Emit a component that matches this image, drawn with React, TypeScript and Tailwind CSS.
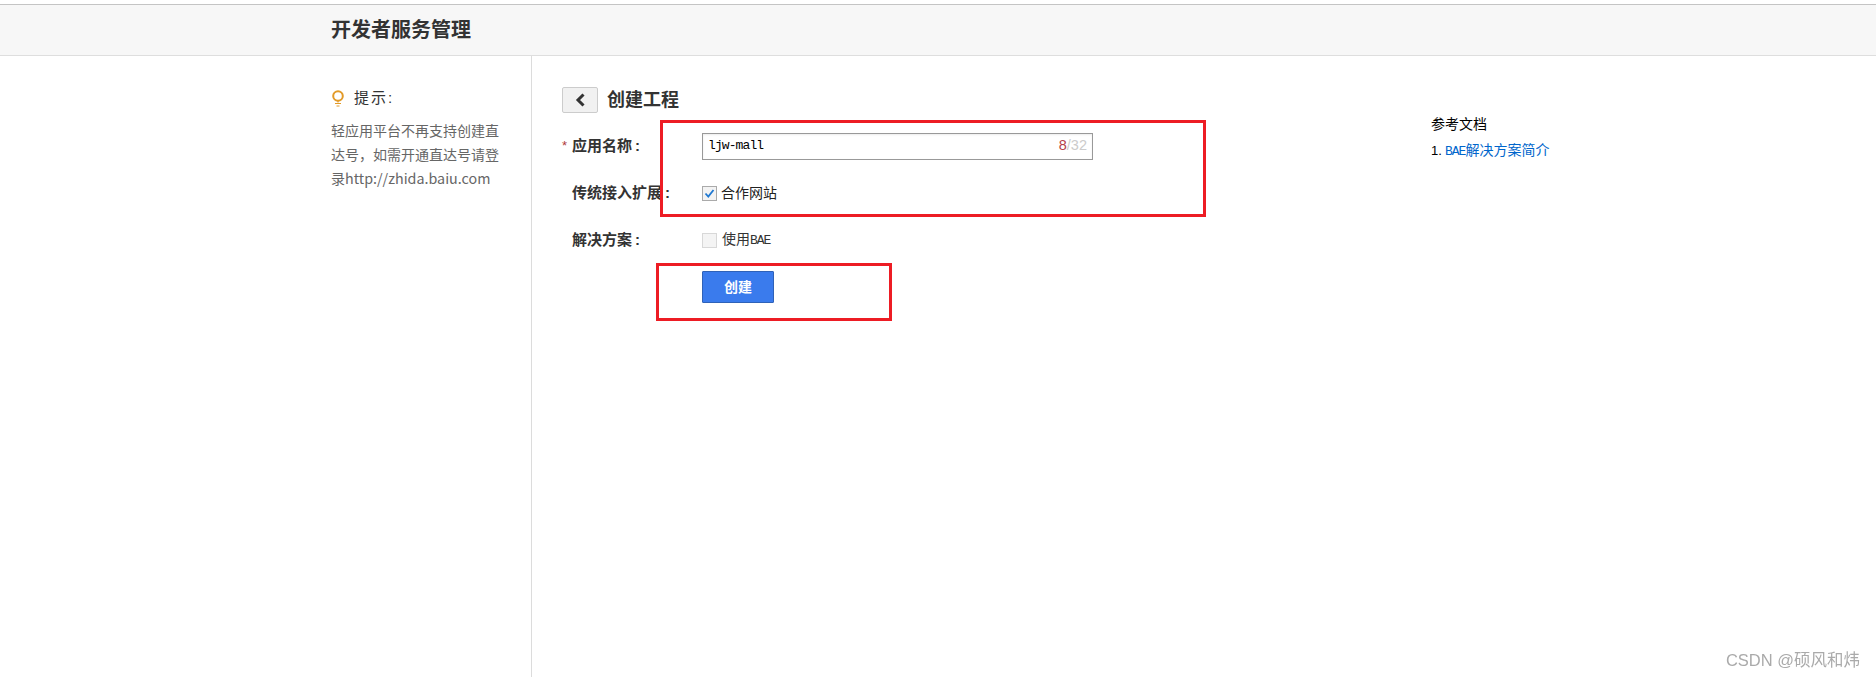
import React from "react";

const sans = "font-['Liberation_Sans','Noto_Sans_CJK_SC',sans-serif]";
const mono = "font-['Liberation_Mono',monospace]";

function FormRow({ label, required, children }: { label?: string; required?: boolean; children: React.ReactNode }) {
  return (
    <div className="flex h-[30px] items-center">
      <div className="flex w-[140px] shrink-0 items-center text-[15px] font-bold text-[#333]">
        <span className="w-[10px] shrink-0 text-[13px] font-normal text-[#b03a3a]">{required ? "*" : ""}</span>
        <span>{label}</span>
        <span className="ml-[3px]">:</span>
      </div>
      {children}
    </div>
  );
}

export default function App() {
  return (
    <div className={`relative flex h-[677px] w-[1876px] flex-col overflow-hidden bg-white ${sans}`}>
      <div className="h-[4px] shrink-0 bg-white" />
      <header className="flex h-[52px] shrink-0 items-center border-y border-t-[#c4c4c4] border-b-[#dedede] bg-[#f7f7f7] pl-[331px]">
        <h1 className="text-[20px] font-bold text-[#333]">开发者服务管理</h1>
      </header>

      <div className="flex flex-1">
        <aside className="w-[532px] shrink-0 border-r border-[#dcdcdc] pl-[331px] pr-[30px] pt-[30px]">
          <div className="flex h-[24px] items-center gap-[10px] pl-[1px] text-[15px] tracking-[2px] text-[#333]">
            <svg width="12" height="17" viewBox="0 0 12 17" fill="none" stroke="#e29a28" strokeWidth="2">
              <circle cx="6" cy="6" r="4.8" />
              <path d="M6 11v1.5M3 13.5h6M4.5 16h3" strokeWidth="1.2" />
            </svg>
            <span>提示:</span>
          </div>
          <p className="mt-[8px] w-[172px] font-['Noto_Sans_CJK_SC',sans-serif] text-[14px] leading-[24px] text-[#666]">
            {"轻应用平台不再支持创建直达号\uFF0C如需开通直达号请登录"}<span className="text-[14.3px]">http://zhida.baiu.com</span>
          </p>
        </aside>

        <main className="flex flex-1 pl-[30px]">
          <div className="w-[869px] shrink-0 pt-[31px]">
            <div className="flex h-[26px] items-center gap-[9px]">
              <button className="flex h-[26px] w-[36px] items-center justify-center rounded-[2px] border border-[#ccc] bg-[#f1f1f1]">
                <svg width="12" height="14" viewBox="0 0 12 14" fill="none" stroke="#333" strokeWidth="3">
                  <path d="M9.5 1.5 4 7l5.5 5.5" />
                </svg>
              </button>
              <h2 className="text-[18px] font-bold text-[#333]">创建工程</h2>
            </div>

            <div className="mt-[18px]">
              <FormRow label="应用名称" required>
                <div className="flex h-[27px] w-[391px] items-center justify-between border-[1.5px] border-[#999] pl-[5px] pr-[5px] shadow-[inset_0_1px_2px_rgba(0,0,0,0.08)]">
                  <span className={`${mono} text-[13px] tracking-[-0.9px] text-black`}>ljw-mall</span>
                  <span className="text-[14.5px] font-light text-[#ccc]">
                    <span className="text-[#b5414a]">8</span>/32
                  </span>
                </div>
              </FormRow>

              <div className="mt-[17px]">
                <FormRow label="传统接入扩展">
                  <div className="flex items-center gap-[4px] text-[14px] text-[#222]">
                    <span className="flex h-[15px] w-[15px] items-center justify-center border border-[#aaa] bg-[#f3f3f3]">
                      <svg width="11" height="11" viewBox="0 0 11 11" fill="none" stroke="#1f78d1" strokeWidth="1.8">
                        <path d="M1.5 5.5 4.3 8.5 9.5 2" />
                      </svg>
                    </span>
                    <span>合作网站</span>
                  </div>
                </FormRow>
              </div>

              <div className="mt-[17px]">
                <FormRow label="解决方案">
                  <div className="flex items-center gap-[5px] text-[14px] text-[#333]">
                    <span className="h-[15px] w-[15px] border border-[#d8d8d8] bg-[#f4f4f4]" />
                    <span>
                      使用<span className={`${mono} text-[13px] tracking-[-1px]`}>BAE</span>
                    </span>
                  </div>
                </FormRow>
              </div>

              <div className="mt-[16px] pl-[140px]">
                <button className="h-[32px] w-[72px] rounded-[1px] border border-[#2f62b8] bg-[#3a7bed] text-[14px] font-bold text-white">
                  创建
                </button>
              </div>
            </div>
          </div>

          <div className="pt-[59px]">
            <div className="text-[14px] leading-[18px] text-black">参考文档</div>
            <div className="mt-[8px] flex items-center text-[13px] leading-[18px] text-black">
              <span className="w-[14px]">1.</span>
              <span className="text-[14px] text-[#0066cc]">
                <span className={`${mono} text-[13px] tracking-[-1px]`}>BAE</span>解决方案简介
              </span>
            </div>
          </div>
        </main>
      </div>

      <div className="absolute left-[660px] top-[120px] h-[97px] w-[546px] border-[3px] border-[#ed1c24]" />
      <div className="absolute left-[656px] top-[263px] h-[58px] w-[236px] border-[3px] border-[#ed1c24]" />
      <div className="absolute right-[16px] top-[650px] text-[16.5px] leading-[20px] text-[#aaa] blur-[0.3px]">CSDN @硕风和炜</div>
    </div>
  );
}
